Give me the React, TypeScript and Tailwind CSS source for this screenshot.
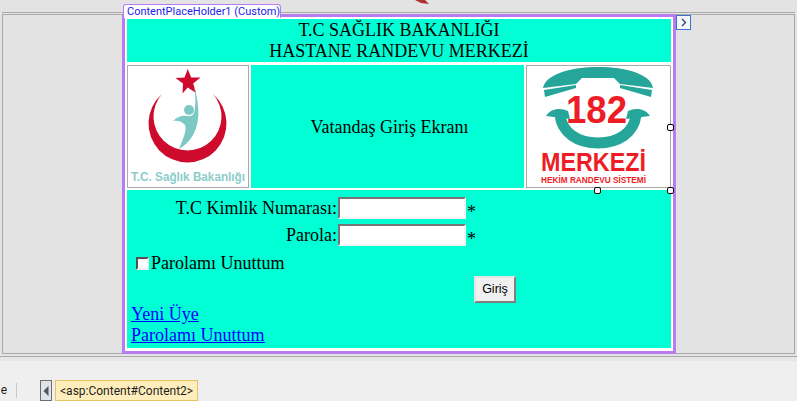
const serif = "font-['Liberation_Serif',serif]";

function HealthLogo() {
  return (
    <svg width="120" height="121" viewBox="0 0 120 121" className="block">
      <polygon
        points="59.7,3 63.2,11.5 72.5,11.5 65.2,17.5 68,27 59.7,21.5 54.5,27.5 55,17.5 47.5,12 56.5,11.5"
        fill="#ce0b2d"
      />
      <path d="M34 28 A39 39 0 1 0 85 28 A34 34 0 1 1 34 28 Z" fill="#ce0b2d" />
      <circle cx="61" cy="44" r="5" fill="#7cc8c4" />
      <path
        d="M66 20 C70 34 74 54 65 69 C61 76 56 80 51 83 C55 73 59 65 57 59 C54 55 49 54 45 55 C49 51 54 49 59 50 C65 51 67 47 67 41 C68 34 67 27 66 20 Z"
        fill="#7cc8c4"
      />
      <text
        x="3"
        y="115"
        textLength="114"
        lengthAdjust="spacingAndGlyphs"
        fontSize="13.5"
        fontWeight="700"
        fontFamily="'Liberation Sans', sans-serif"
        fill="#8ccdc9"
      >
        T.C. Sağlık Bakanlığı
      </text>
    </svg>
  );
}

function PhoneLogo() {
  return (
    <svg width="143" height="121" viewBox="0 0 143 121" className="block">
      <g fill="#26a69a">
        <path d="M16 22 C19 8 44 1 71 1 C99 1 124 8 126 22 L93 18 L87 12 L55 12 L49 18 Z" />
        <polygon points="17,24 49,19 49,22 18,31" />
        <polygon points="93,19 125,24 124,31 93,22" />
        <path d="M19 50 C23 43 33 41 41 45 L43 53 L27 51 Z" />
        <path d="M123 50 C119 43 109 41 101 45 L99 53 L115 51 Z" />
      </g>
      <path
        d="M33 49 C35 67 51 77 71 77 C91 77 107 67 109 49"
        fill="none"
        stroke="#26a69a"
        strokeWidth="11"
      />
      <g fill="#ee1c25" fontFamily="'Liberation Sans', sans-serif" fontWeight="700">
        <text x="39" y="57" fontSize="38" textLength="61" lengthAdjust="spacingAndGlyphs">
          182
        </text>
        <text x="14" y="105" fontSize="25" textLength="105" lengthAdjust="spacingAndGlyphs">
          MERKEZİ
        </text>
        <text x="14" y="117" fontSize="9.5" textLength="105" lengthAdjust="spacingAndGlyphs">
          HEKİM RANDEVU SİSTEMİ
        </text>
      </g>
    </svg>
  );
}

function Handle({ className }: { className: string }) {
  return (
    <div
      className={`absolute h-[7px] w-[7px] rounded-[2px] border border-black bg-white ${className}`}
    />
  );
}

function FormRow({ label }: { label: string }) {
  return (
    <div className="flex h-[22px] items-start">
      <span className="h-[22px] w-[210px] pt-[1px] text-right">{label}</span>
      <input
        type="text"
        className="ml-[1px] h-[22px] w-[128px] border-2 border-t-[#767676] border-r-[#f4f4f4] border-b-[#f4f4f4] border-l-[#767676] bg-white"
      />
      <span className="ml-[1px] h-[22px] pt-[5px]">*</span>
    </div>
  );
}

export default function App() {
  return (
    <div className="relative flex h-[401px] w-[797px] flex-col overflow-hidden bg-[#e3e3e3] font-['Roboto',sans-serif]">
      {/* top strip, the icon of the toolbar above is cut off */}
      <div className="mx-[2px] h-[13px] shrink-0 overflow-hidden border-b border-[#a9a9a9]">
        <svg width="30" height="4" viewBox="0 0 30 4" className="ml-[405px] block">
          <path d="M8 0 L18 0 L22 4 L14 3 Z" fill="#b03030" />
        </svg>
      </div>

      <div className="mx-[2px] mt-[1px] flex h-[340px] shrink-0 border border-[#a9a9a9]">
        <div className="-mt-px ml-[119px] h-[340px] w-[554px] border-[3px] border-[#b87bf0] bg-white pt-[2px] pr-[2px] pb-[3px] pl-[2px]">
          <div className={`flex h-full flex-col text-[18px] leading-[21px] text-black ${serif}`}>
            <div className="flex h-[43px] shrink-0 flex-col justify-center bg-[#00ffd5] pt-[1px] text-center">
              <div>T.C SAĞLIK BAKANLIĞI</div>
              <div>HASTANE RANDEVU MERKEZİ</div>
            </div>
            <div className="mt-[3px] flex h-[123px] shrink-0 gap-[2px]">
              <div className="h-full w-[122px] shrink-0 border border-[#a9a9a9] bg-white">
                <HealthLogo />
              </div>
              <div className="flex flex-1 items-center justify-center bg-[#00ffd5] pt-[2px] pl-[4px]">
                Vatandaş Giriş Ekranı
              </div>
              <div className="h-full w-[145px] shrink-0 border border-[#a9a9a9] bg-white">
                <PhoneLogo />
              </div>
            </div>
            <div className="mt-[2px] flex w-full flex-1 flex-col bg-[#00ffd5] pt-[7px]">
              <div className="flex flex-col gap-[5px]">
                <FormRow label="T.C Kimlik Numarası:" />
                <FormRow label="Parola:" />
              </div>
              <div className="mt-[6px] flex h-[22px] items-center pl-[9px]">
                <input
                  type="checkbox"
                  className="mt-[1px] h-[13px] w-[13px] appearance-none border-2 border-t-[#505050] border-r-[#f0f0f0] border-b-[#f0f0f0] border-l-[#505050] bg-white"
                />
                <span className="ml-[2px]">Parolamı Unuttum</span>
              </div>
              <button className="ml-[347px] mt-[2px] h-[27px] w-[42px] border-2 border-t-[#e4e4e4] border-r-[#808080] border-b-[#808080] border-l-[#e4e4e4] bg-[#f0f0f0] font-['Liberation_Sans',sans-serif] text-[12.5px] leading-none">
                Giriş
              </button>
              <div className="mt-[1px] flex flex-col items-start pl-[4px] text-[#0000ff] underline">
                <a href="#">Yeni Üye</a>
                <a href="#">Parolamı Unuttum</a>
              </div>
            </div>
          </div>
        </div>
      </div>

      <div className="mt-[2px] h-px shrink-0 bg-[#a9a9a9]" />
      <div className="h-[4px] shrink-0 bg-[#e6e6e6]" />
      <div className="flex flex-1 items-start bg-[#efefef] pt-[19px] text-[12px] leading-[20px] text-[#1e1e1e]">
        <span className="-ml-[1px] w-[8px] overflow-hidden text-right">e</span>
        <div className="ml-[9px] mt-[3px] h-[15px] w-px bg-[#c8c8c8]" />
        <div className="ml-[23px] flex h-[21px] w-[12px] items-center justify-center border border-[#6d6d6d] bg-[#dfe3ea]">
          <svg width="6" height="10" viewBox="0 0 6 10">
            <path d="M5.5 0 L0.5 5 L5.5 10 Z" fill="#555" />
          </svg>
        </div>
        <div className="ml-[3px] h-[21px] w-[143px] whitespace-nowrap border border-[#e5c365] bg-[#ffeebb] pl-[4px]">
          {"<asp:Content#Content2>"}
        </div>
      </div>

      {/* designer overlays */}
      <div className="absolute left-[123px] top-[4px] h-[14px] w-[158px] whitespace-nowrap rounded-t-[3px] border border-b-0 border-[#b87bf0] bg-white pl-[3px] text-[11px] leading-[13px] text-[#2222ee]">
        ContentPlaceHolder1 (Custom)
      </div>
      <div className="absolute left-[676px] top-[15px] flex h-[15px] w-[15px] items-center justify-center border border-[#3a6fd0] bg-[#f5f7fb]">
        <svg width="6" height="9" viewBox="0 0 6 9">
          <path d="M1 1 L4.5 4.5 L1 8" fill="none" stroke="#26406e" strokeWidth="1.3" />
        </svg>
      </div>
      <Handle className="left-[667px] top-[124px]" />
      <Handle className="left-[594px] top-[187px]" />
      <Handle className="left-[667px] top-[187px]" />
    </div>
  );
}
